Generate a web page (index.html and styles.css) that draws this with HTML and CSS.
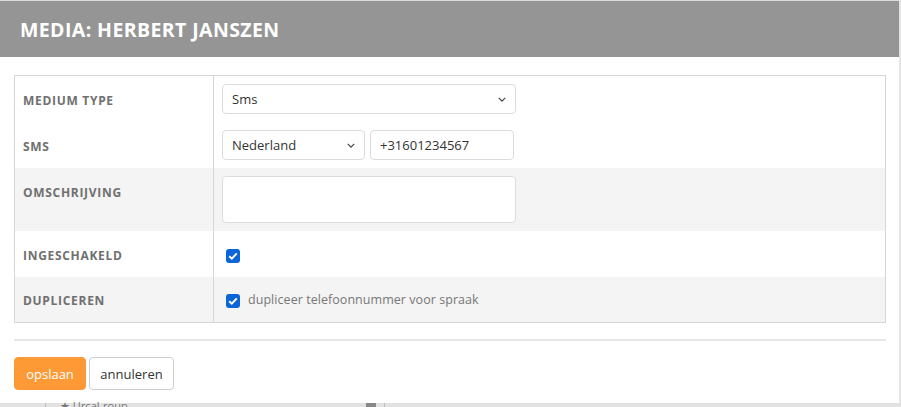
FILE: index.html
```html
<!DOCTYPE html>
<html lang="nl">
<head>
<meta charset="utf-8">
<title>Media: Herbert Janszen</title>
<link rel="stylesheet" href="styles.css">
</head>
<body>
<div class="screen">
  <div class="modal">
    <div class="modal-header">
      <h1 class="modal-title">MEDIA: HERBERT JANSZEN</h1>
    </div>
    <div class="modal-body">
      <div class="form-table">
        <div class="row">
          <div class="label">MEDIUM TYPE</div>
          <div class="field">
            <div class="select select-wide"><span>Sms</span><svg class="chev" viewBox="0 0 10 6" width="8" height="5"><path d="M1 1l4 4 4-4" fill="none" stroke="#444" stroke-width="1.5"/></svg></div>
          </div>
        </div>
        <div class="row">
          <div class="label">SMS</div>
          <div class="field field-inline">
            <div class="select select-country"><span>Nederland</span><svg class="chev" viewBox="0 0 10 6" width="8" height="5"><path d="M1 1l4 4 4-4" fill="none" stroke="#444" stroke-width="1.5"/></svg></div>
            <div class="input input-phone">+31601234567</div>
          </div>
        </div>
        <div class="row row-alt">
          <div class="label">OMSCHRIJVING</div>
          <div class="field">
            <div class="textarea"></div>
          </div>
        </div>
        <div class="row row-check">
          <div class="label label-center">INGESCHAKELD</div>
          <div class="field field-check">
            <span class="checkbox"><svg viewBox="0 0 14 14" width="14" height="14"><path d="M3.2 7.2l2.6 2.5 5-5.3" fill="none" stroke="#fff" stroke-width="2"/></svg></span>
          </div>
        </div>
        <div class="row row-alt row-check row-last">
          <div class="label label-center">DUPLICEREN</div>
          <div class="field field-check">
            <span class="checkbox"><svg viewBox="0 0 14 14" width="14" height="14"><path d="M3.2 7.2l2.6 2.5 5-5.3" fill="none" stroke="#fff" stroke-width="2"/></svg></span>
            <span class="check-text">dupliceer telefoonnummer voor spraak</span>
          </div>
        </div>
      </div>
      <div class="separator"></div>
      <div class="actions">
        <button class="btn btn-primary">opslaan</button>
        <button class="btn btn-default">annuleren</button>
      </div>
    </div>
  </div>
  <div class="backdrop-strip">
    <span class="bg-line bg-line-1"></span>
    <span class="bg-text">★ Urcal-roup</span>
    <span class="bg-square"></span>
    <span class="bg-line bg-line-2"></span>
  </div>
</div>
</body>
</html>
```
FILE: styles.css
```css
html, body {
  margin: 0;
  padding: 0;
  background: #e4e4e4;
  font-family: "Open Sans", "Noto Sans", sans-serif;
  overflow: hidden;
}

.screen {
  width: 901px;
  height: 407px;
  display: flex;
  flex-direction: column;
  overflow: hidden;
}

.modal {
  width: 899px;
  height: 402px;
  background: #fff;
  border-top: 1px solid #d9d9d9;
  flex: none;
}

.modal-header {
  height: 56px;
  background: #959595;
  display: flex;
  align-items: center;
  padding-left: 20px;
}

.modal-title {
  margin: 0;
  color: #fff;
  font-size: 19.5px;
  font-weight: 700;
  letter-spacing: 0.4px;
}

.modal-body {
  padding: 18px 13px 0 14px;
}

.form-table {
  border: 1px solid #d6d6d6;
}

.row {
  display: grid;
  grid-template-columns: 199px 1fr;
  min-height: 46px;
}

.row-alt {
  background: #f4f4f4;
}

.label {
  border-right: 1px solid #d6d6d6;
  padding: 16px 8px 0 8px;
  font-size: 12px;
  font-weight: 700;
  color: #707070;
  letter-spacing: 0.7px;
  line-height: 17px;
}

.label-center {
  padding-top: 0;
  display: flex;
  align-items: center;
  padding-bottom: 0;
}

.field {
  padding: 8px 0 8px 8px;
  display: flex;
  align-items: flex-start;
}

.field-inline {
  gap: 5px;
}

.select, .input, .textarea {
  box-sizing: border-box;
  height: 30px;
  border: 1px solid #dcdcdc;
  border-radius: 4px;
  background: #fff;
  font-size: 13px;
  color: #333;
  display: flex;
  align-items: center;
  padding: 0 9px;
}

.select {
  justify-content: space-between;
}

.select-wide { width: 294px; }
.select-country { width: 143px; }
.input-phone { width: 144px; }

.textarea {
  width: 294px;
  height: 47px;
}

.row-check .field {
  padding: 0 0 0 12px;
  align-items: center;
}

.row-check .label {
  padding-top: 2px;
}

.row-last {
  min-height: 45px;
}

.checkbox {
  width: 14px;
  height: 14px;
  border-radius: 3px;
  background: #0b64d8;
  display: inline-flex;
  flex: none;
  margin-top: 3px;
}

.check-text {
  margin-left: 8px;
  font-size: 12.5px;
  color: #777;
  letter-spacing: 0.05px;
}

.separator {
  height: 2px;
  background: #e6e6e6;
  margin-top: 16px;
}

.actions {
  display: flex;
  gap: 3px;
  margin-top: 16px;
}

.btn {
  height: 33px;
  border-radius: 4px;
  font-family: "Open Sans", "Noto Sans", sans-serif;
  font-size: 13px;
  padding: 0;
  cursor: pointer;
}

.btn-primary {
  width: 72px;
  background: #fd9a36;
  border: 1px solid #fd9a36;
  color: #fff;
}

.btn-default {
  width: 85px;
  background: #fff;
  border: 1px solid #cfcfcf;
  color: #333;
}

.backdrop-strip {
  flex: 1;
  display: flex;
  align-items: flex-start;
  background: #e2e2e2;
  font-size: 11px;
  color: #777;
  line-height: 10px;
}

.bg-line {
  width: 1px;
  height: 10px;
  background: #bbb;
}

.bg-line-1 { margin-left: 45px; }

.bg-text {
  margin-left: 14px;
  margin-top: -2px;
  width: 300px;
}

.bg-square {
  width: 10px;
  height: 6px;
  background: #888;
  margin-left: 6px;
}

.bg-line-2 { margin-left: 8px; }
```
